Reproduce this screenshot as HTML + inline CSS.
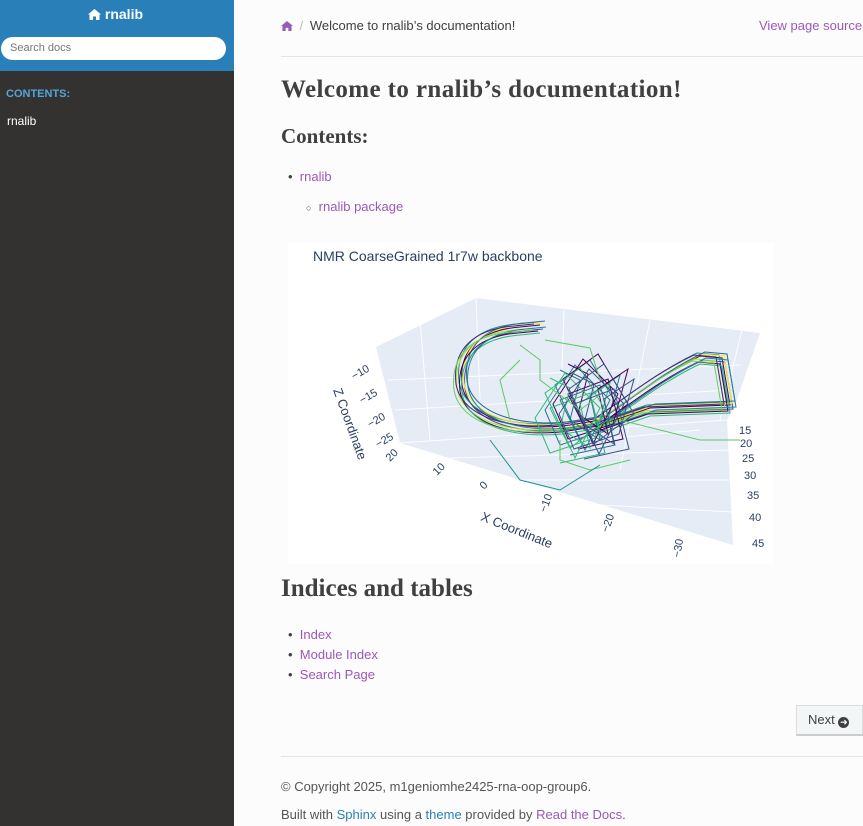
<!DOCTYPE html>
<html><head><meta charset="utf-8">
<style>
*{margin:0;padding:0;box-sizing:border-box}
body{width:863px;height:826px;overflow:hidden;background:#fcfcfc;font-family:"Liberation Sans",sans-serif;color:#404040;position:relative}
.side{position:absolute;left:0;top:0;width:234px;height:826px;background:#343131}
.sidetop{position:absolute;left:0;top:0;width:234px;height:71px;background:#2980b9}
.abs{position:absolute;white-space:nowrap}
a{color:#9b59b6;text-decoration:none}
.h{font-family:"Liberation Serif","DejaVu Serif",serif;font-weight:bold;color:#404040}
</style></head><body>
<div class="side"></div>
<div class="sidetop"></div>
<div class="abs" style="left:88px;top:6px;color:#fff;font-weight:bold;font-size:14px">
<svg width="13" height="11" viewBox="0 0 13 11" style="vertical-align:-1px"><path d="M6.5 0 L13 5.5 L11.5 5.5 L11.5 11 L8 11 L8 7.5 L5 7.5 L5 11 L1.5 11 L1.5 5.5 L0 5.5Z" fill="#fff"/></svg> rnalib</div>
<div class="abs" style="left:1px;top:37px;width:225px;height:23px;background:#fff;border-radius:12px;font-size:11px;color:#777;padding:5px 9px">Search docs</div>
<div class="abs" style="left:6px;top:88px;color:#55a5d9;font-weight:bold;font-size:11px">CONTENTS:</div>
<div class="abs" style="left:7px;top:114px;color:#fff;font-size:12px">rnalib</div>

<div class="abs" style="left:281px;top:18px;font-size:13px">
<svg width="12" height="10" viewBox="0 0 13 11" style="vertical-align:-1px"><path d="M6.5 0 L13 5.5 L11.5 5.5 L11.5 11 L8 11 L8 7.5 L5 7.5 L5 11 L1.5 11 L1.5 5.5 L0 5.5Z" fill="#9b59b6"/></svg>
<span style="color:#bbb;margin:0 3px">/</span> Welcome to rnalib’s documentation!</div>
<div class="abs" style="left:759px;top:18px;font-size:13px;color:#9b59b6">View page source</div>
<div class="abs" style="left:281px;top:56px;width:582px;height:1px;background:#e1e4e5"></div>

<div class="abs h" style="left:281px;top:76px;font-size:25px;letter-spacing:0.4px">Welcome to rnalib’s documentation!</div>
<div class="abs h" style="left:281px;top:124px;font-size:21px">Contents:</div>
<div class="abs" style="left:288px;top:169px;font-size:13px">•&nbsp;&nbsp;<a>rnalib</a></div>
<div class="abs" style="left:306px;top:199px;font-size:13px"><span style="font-size:9px">○</span>&nbsp;&nbsp;<a>rnalib package</a></div>

<svg class="abs" style="left:288px;top:243px" width="486" height="321" viewBox="288 243 486 321">
<rect x="288" y="243" width="486" height="321" fill="#fff"/>
<polygon points="376,347 476,298 760,333 735,405 727,420 733,545 400,443" fill="#e5ecf6"/>
<g stroke="#fff" stroke-width="1" fill="none" opacity="0.9">
<line x1="476" y1="298" x2="480" y2="400"/><line x1="564" y1="310" x2="560" y2="425"/><line x1="650" y1="320" x2="620" y2="470"/><line x1="742" y1="330" x2="720" y2="420"/>
<line x1="400" y1="443" x2="727" y2="420"/><line x1="395" y1="410" x2="730" y2="390"/><line x1="388" y1="380" x2="740" y2="365"/>
<line x1="450" y1="458" x2="730" y2="450"/><line x1="520" y1="480" x2="733" y2="480"/><line x1="600" y1="505" x2="733" y2="512"/>
<line x1="420" y1="321" x2="430" y2="440"/><line x1="560" y1="443" x2="700" y2="430"/>
</g>
<defs>
<path id="s" d="M540 325 L520 327 C480 330 458 350 462 385 C468 420 520 432 570 425 L600 420 C630 400 660 375 700 356 L722 358 L730 405 L650 408 L600 425" fill="none"/>
<path id="t" d="M560 370 L580 380 L570 420 L600 440 L590 395 L620 375 L605 430 L560 445 L545 410 L575 365 L610 400 L585 450 L555 385 L590 360 L620 410 L580 440 L560 400 L600 385 L615 445 L570 455" fill="none"/>
</defs>
<g stroke-width="1">
<use href="#s" stroke="#440154"/>
<use href="#s" stroke="#21918c" transform="translate(-3,-3)"/>
<use href="#s" stroke="#3b528b" transform="translate(3,4)"/>
<use href="#s" stroke="#b5de2b" transform="translate(-5,3)"/>
<use href="#s" stroke="#fde725" transform="translate(2,-2)"/>
<use href="#s" stroke="#31688e" transform="translate(5,-4)"/>
<use href="#s" stroke="#440154" transform="translate(-2,6)"/>
<use href="#s" stroke="#35b779" transform="translate(0,8)"/>
<use href="#s" stroke="#482878" transform="translate(-6,-1)"/>
<use href="#s" stroke="#26828e" transform="translate(6,2)"/>
<use href="#s" stroke="#6ece58" transform="translate(-8,5)"/>
<use href="#t" stroke="#2c728e"/>
<use href="#t" stroke="#440154" transform="translate(8,-6)"/>
<use href="#t" stroke="#35b779" transform="translate(-10,8)"/>
<use href="#t" stroke="#3b528b" transform="translate(14,4)"/>
<path d="M520 345 L540 360 L540 380 L580 410 L600 395 M545 340 L590 348 L600 380 M620 420 L700 440 L740 440 M560 440 L560 460 L590 470 L630 460 M520 360 L500 380 L510 420" stroke="#5ec962" fill="none"/>
<path d="M600 465 L560 490 L520 480 L490 440" stroke="#21918c" fill="none"/>
</g>
<text x="313" y="261" font-size="14" fill="#2a3f5f" font-family="Liberation Sans">NMR CoarseGrained 1r7w backbone</text>
<g font-size="11" fill="#2a3f5f" font-family="Liberation Sans">
<text x="354" y="380" transform="rotate(-30 354 380)">−10</text>
<text x="362" y="404" transform="rotate(-30 362 404)">−15</text>
<text x="370" y="428" transform="rotate(-30 370 428)">−20</text>
<text x="378" y="448" transform="rotate(-30 378 448)">−25</text>
<text x="390" y="462" transform="rotate(-45 390 462)">20</text>
<text x="437" y="476" transform="rotate(-45 437 476)">10</text>
<text x="484" y="490" transform="rotate(-45 484 490)">0</text>
<text x="546" y="513" transform="rotate(-70 546 513)">−10</text>
<text x="608" y="533" transform="rotate(-70 608 533)">−20</text>
<text x="680" y="558" transform="rotate(-80 680 558)">−30</text>
<text x="739" y="434">15</text><text x="740" y="447">20</text><text x="742" y="462">25</text>
<text x="744" y="479">30</text><text x="747" y="499">35</text><text x="749" y="521">40</text><text x="752" y="547">45</text>
<text x="480" y="520" font-size="13" transform="rotate(22 480 520)">X Coordinate</text>
<text x="333" y="390" font-size="13" transform="rotate(70 333 390)">Z Coordinate</text>
</g>
</svg>

<div class="abs h" style="left:281px;top:575px;font-size:25px">Indices and tables</div>
<div class="abs" style="left:288px;top:625px;font-size:13px;line-height:20px">•&nbsp;&nbsp;<a>Index</a><br>•&nbsp;&nbsp;<a>Module Index</a><br>•&nbsp;&nbsp;<a>Search Page</a></div>

<div class="abs" style="left:796px;top:705px;width:67px;height:31px;background:#f3f6f6;border:1px solid #ddd;border-bottom:2px solid #ccc;font-size:13px;padding:6px 0 0 11px">Next <span style="display:inline-block;width:11px;height:11px;border-radius:50%;background:#404040;color:#fff;font-size:9px;line-height:11px;text-align:center;vertical-align:-1px">➜</span></div>
<div class="abs" style="left:281px;top:756px;width:582px;height:1px;background:#e1e4e5"></div>
<div class="abs" style="left:281px;top:779px;font-size:13px;color:#555">© Copyright 2025, m1geniomhe2425-rna-oop-group6.</div>
<div class="abs" style="left:281px;top:807px;font-size:13px;color:#555">Built with <span style="color:#2980b9">Sphinx</span> using a <span style="color:#2980b9">theme</span> provided by <a>Read the Docs</a>.</div>
</body></html>
